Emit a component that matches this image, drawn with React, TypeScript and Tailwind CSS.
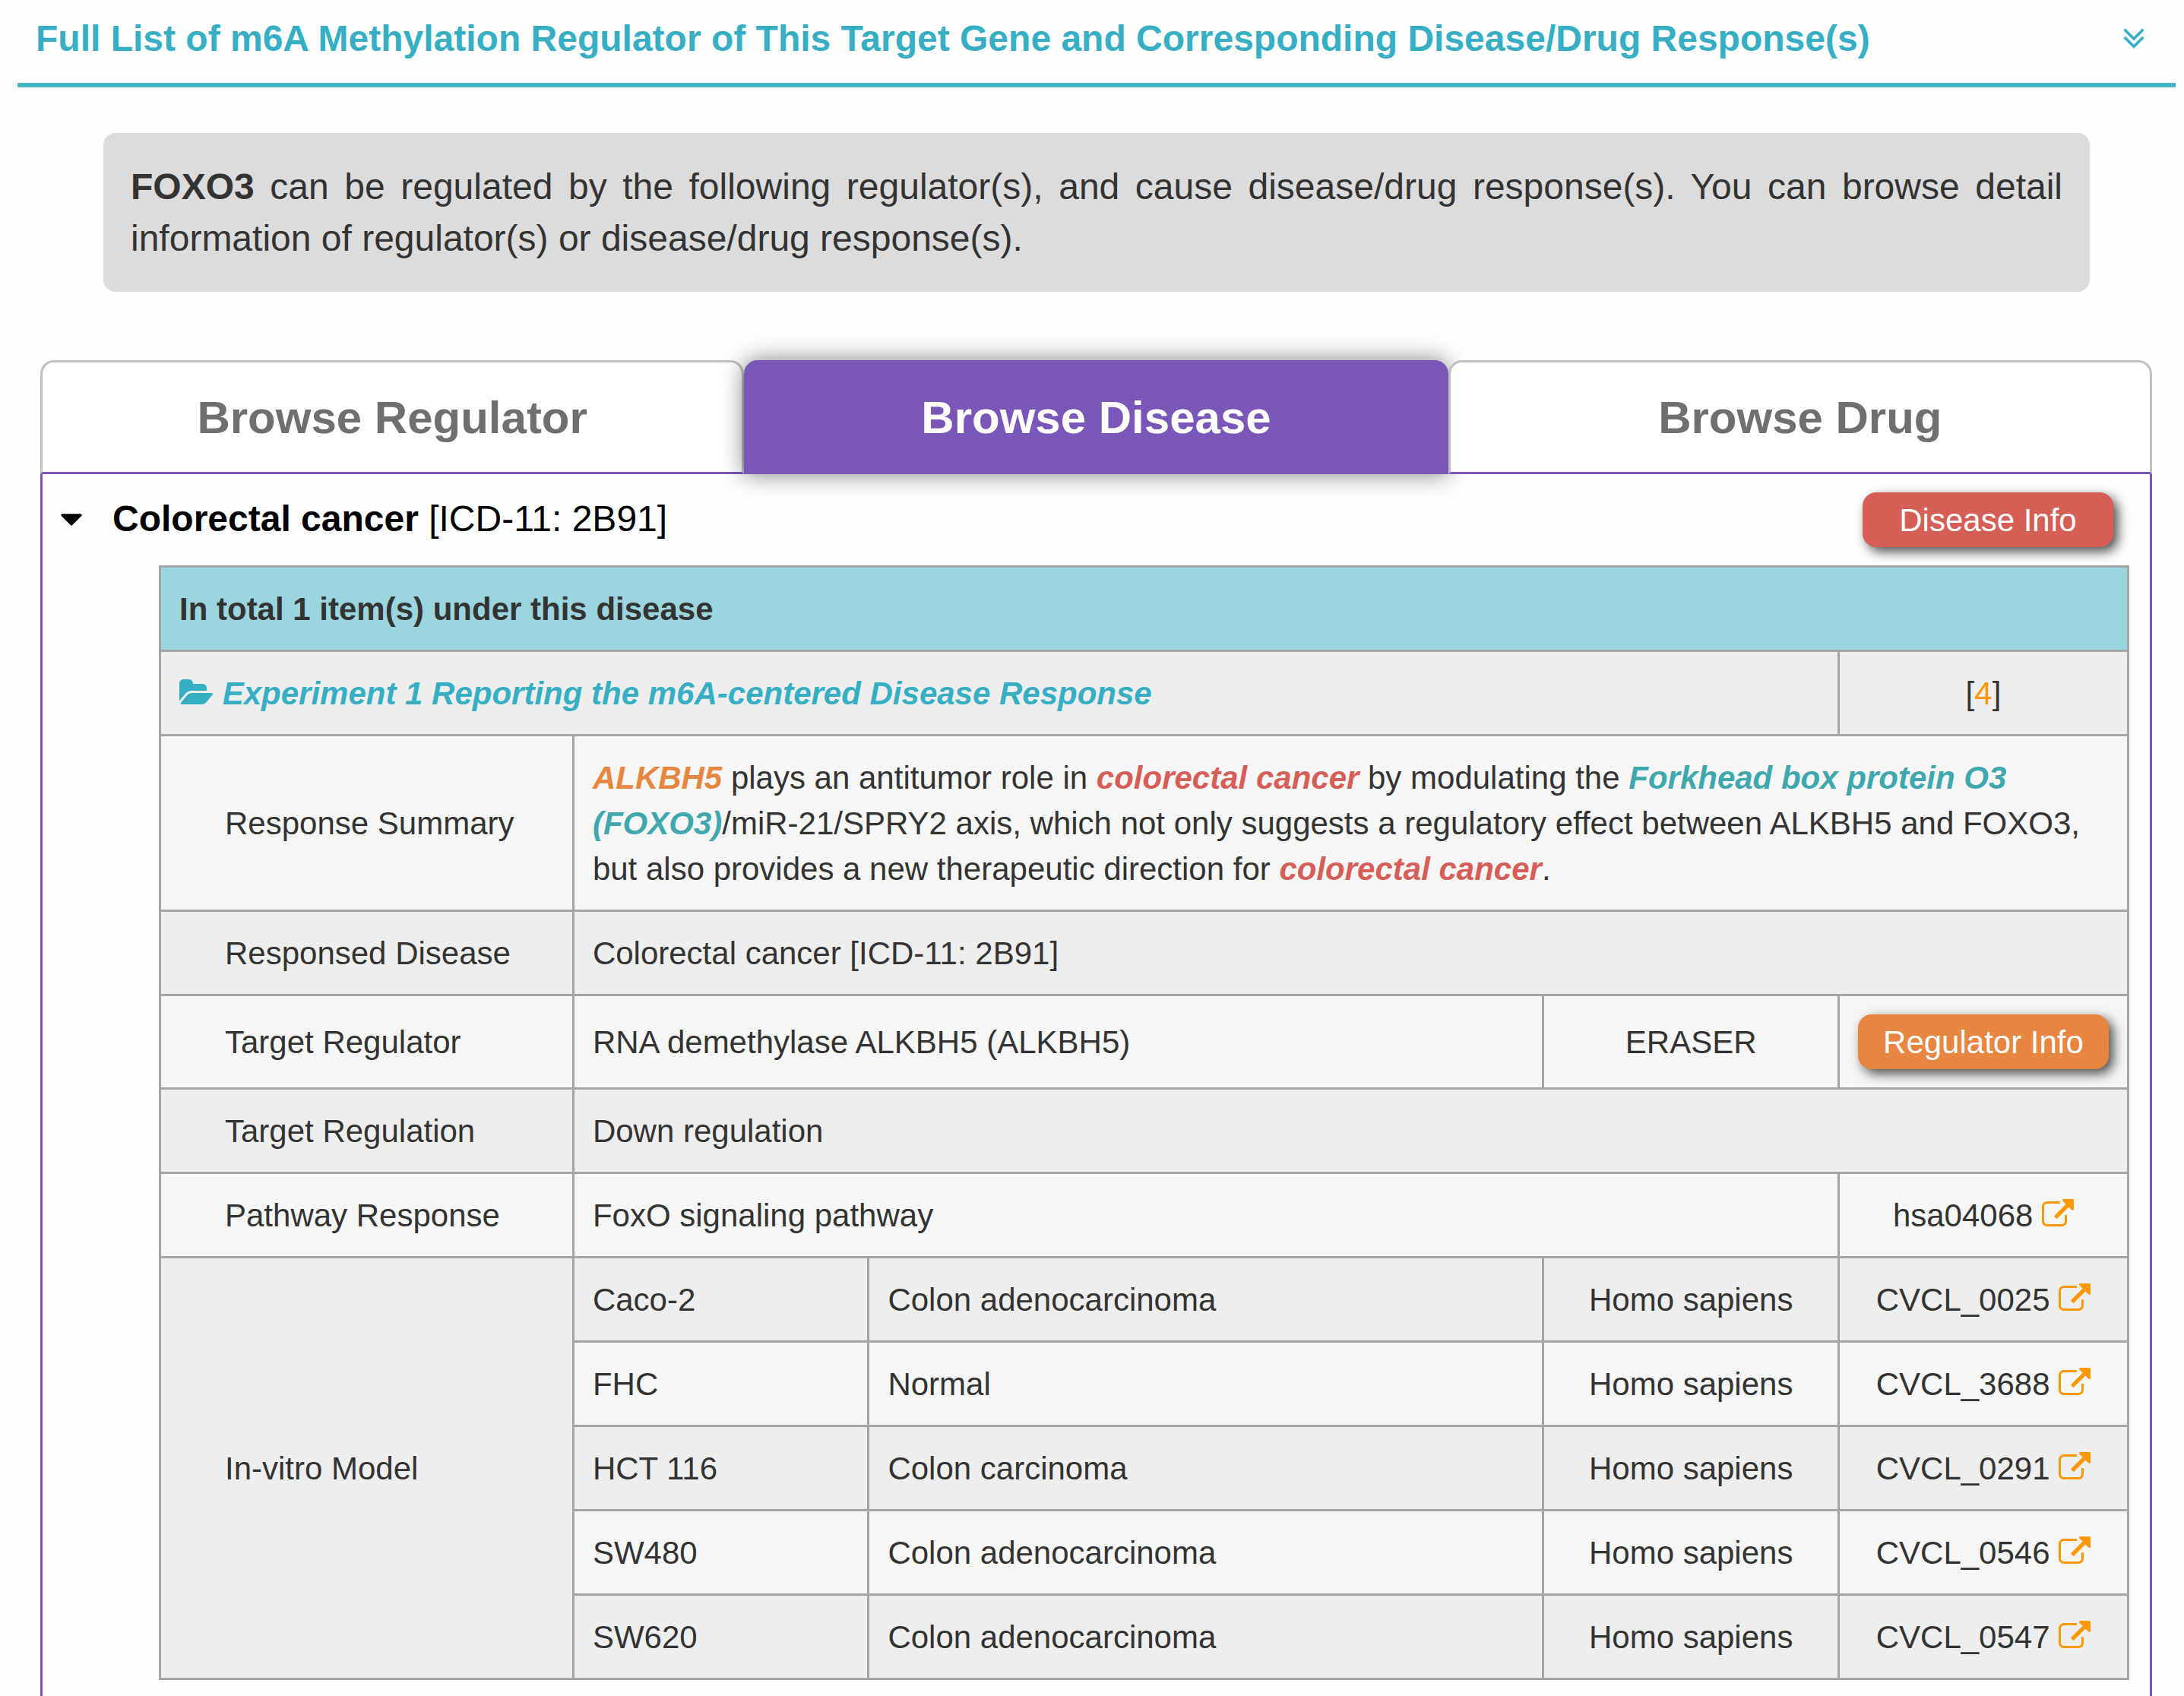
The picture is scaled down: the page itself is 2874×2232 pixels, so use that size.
import { useState } from "react";
import type { ReactNode } from "react";

const TABS = ["Browse Regulator", "Browse Disease", "Browse Drug"];

const MODELS = [
  { cell: "Caco-2", disease: "Colon adenocarcinoma", species: "Homo sapiens", id: "CVCL_0025" },
  { cell: "FHC", disease: "Normal", species: "Homo sapiens", id: "CVCL_3688" },
  { cell: "HCT 116", disease: "Colon carcinoma", species: "Homo sapiens", id: "CVCL_0291" },
  { cell: "SW480", disease: "Colon adenocarcinoma", species: "Homo sapiens", id: "CVCL_0546" },
  { cell: "SW620", disease: "Colon adenocarcinoma", species: "Homo sapiens", id: "CVCL_0547" },
];

function AngleDoubleDown() {
  return (
    <svg viewBox="0 0 1792 1792" className="size-12 block" fill="currentColor" aria-hidden="true">
      <path d="M1395 864q0 13-10 23l-466 466q-10 10-23 10t-23-10l-466-466q-10-10-10-23t10-23l50-50q10-10 23-10t23 10l393 393 393-393q10-10 23-10t23 10l50 50q10 10 10 23zm0-384q0 13-10 23l-466 466q-10 10-23 10t-23-10l-466-466q-10-10-10-23t10-23l50-50q10-10 23-10t23 10l393 393 393-393q10-10 23-10t23 10l50 50q10 10 10 23z" />
    </svg>
  );
}

function CaretDown() {
  return (
    <svg viewBox="0 0 1792 1792" className="size-12 block shrink-0" fill="currentColor" aria-hidden="true">
      <path d="M1408 704q0 26-19 45l-448 448q-19 19-45 19t-45-19l-448-448q-19-19-19-45t19-45 45-19h896q26 0 45 19t19 45z" />
    </svg>
  );
}

function FolderOpen() {
  return (
    <svg viewBox="0 0 1920 1792" className="h-[42px] w-[45px] inline-block align-[-6px]" fill="currentColor" aria-hidden="true">
      <path d="M1879 952q0 31-31 66l-336 396q-43 51-120.5 86.5t-143.5 35.5h-1088q-34 0-60.5-13t-26.5-43q0-31 31-66l336-396q43-51 120.5-86.5t143.5-35.5h1088q34 0 60.5 13t26.5 43zm-343-344v160h-832q-94 0-197 47.5t-164 119.5l-337 396-5 6q0-4-.5-12.5t-.5-12.5v-960q0-92 66-158t158-66h320q92 0 158 66t66 158v32h544q92 0 158 66t66 158z" />
    </svg>
  );
}

function ExternalLink() {
  return (
    <svg viewBox="0 0 1792 1792" className="size-[42px] inline-block align-[-6px]" fill="currentColor" aria-hidden="true">
      <path d="M1408 928v320q0 119-84.5 203.5t-203.5 84.5h-832q-119 0-203.5-84.5t-84.5-203.5v-832q0-119 84.5-203.5t203.5-84.5h704q14 0 23 9t9 23v64q0 14-9 23t-23 9h-704q-66 0-113 47t-47 113v832q0 66 47 113t113 47h832q66 0 113-47t47-113v-320q0-14 9-23t23-9h64q14 0 23 9t9 23zm384-864v512q0 26-19 45t-45 19-45-19l-176-176-652 652q-10 10-23 10t-23-10l-114-114q-10-10-10-23t10-23l652-652-176-176q-19-19-19-45t19-45 45-19h512q26 0 45 19t19 45z" />
    </svg>
  );
}

function Cell({ children, className = "pt-[25px] pb-[23px]", colSpan }: { children: ReactNode; className?: string; colSpan?: number }) {
  return (
    <td colSpan={colSpan} className={`border-3 border-[#a5a5a5] px-6 ${className}`}>
      {children}
    </td>
  );
}

function Label({ children, rowSpan }: { children: ReactNode; rowSpan?: number }) {
  return (
    <th scope="row" rowSpan={rowSpan} className="border-3 border-[#a5a5a5] pt-[25px] pr-6 pb-[23px] pl-[84px] text-left font-normal">
      {children}
    </th>
  );
}

function IdLink({ id }: { id: string }) {
  return (
    <>
      {id}{" "}
      <a href={`#${id}`} aria-label={`Open ${id}`} className="text-[#ff9800]">
        <ExternalLink />
      </a>
    </>
  );
}

function DiseaseTable() {
  return (
    <table className="w-full table-fixed border-collapse text-[42px] leading-[60px] text-[#333333]">
      <colgroup>
        <col className="w-[21%]" />
        <col className="w-[15%]" />
        <col />
        <col className="w-[15%]" />
        <col className="w-[381px]" />
      </colgroup>
      <thead>
        <tr className="bg-[#9bd5df]">
          <th colSpan={5} className="border-3 border-[#a5a5a5] px-6 pt-[25px] pb-[23px] text-left font-bold">
            In total 1 item(s) under this disease
          </th>
        </tr>
      </thead>
      <tbody>
        <tr className="bg-[#eeeeee]">
          <Cell colSpan={4} className="pt-[25px] pb-[23px] font-bold italic text-[#36aec3]">
            <FolderOpen /> Experiment 1 Reporting the m6A-centered Disease Response
          </Cell>
          <Cell className="pt-[25px] pb-[23px] text-center">
            [<a href="#ref4" className="text-[#ff9800]">4</a>]
          </Cell>
        </tr>
        <tr className="bg-[#f6f6f6]">
          <Label>Response Summary</Label>
          <Cell colSpan={4}>
            <b className="italic text-[#e78640]">ALKBH5</b> plays an antitumor role in{" "}
            <b className="italic text-[#d55f57]">colorectal cancer</b> by modulating the{" "}
            <b className="italic text-[#3fa7ae]">Forkhead box protein O3 (FOXO3)</b>
            /miR-21/SPRY2 axis, which not only suggests a regulatory effect between ALKBH5 and FOXO3, but also provides a
            new therapeutic direction for <b className="italic text-[#d55f57]">colorectal cancer</b>.
          </Cell>
        </tr>
        <tr className="bg-[#eeeeee]">
          <Label>Responsed Disease</Label>
          <Cell colSpan={4}>Colorectal cancer [ICD-11: 2B91]</Cell>
        </tr>
        <tr className="bg-[#f6f6f6]">
          <Label>Target Regulator</Label>
          <Cell colSpan={2}>RNA demethylase ALKBH5 (ALKBH5)</Cell>
          <Cell className="pt-[25px] pb-[23px] text-center">ERASER</Cell>
          <Cell className="py-6">
            <button
              type="button"
              className="mx-auto block h-[72px] w-[330px] rounded-[18px] bg-[#e78640] pt-0.5 text-white shadow-[6px_6px_15px_rgba(0,0,0,0.7)]"
            >
              Regulator Info
            </button>
          </Cell>
        </tr>
        <tr className="bg-[#eeeeee]">
          <Label>Target Regulation</Label>
          <Cell colSpan={4}>Down regulation</Cell>
        </tr>
        <tr className="bg-[#f6f6f6]">
          <Label>Pathway Response</Label>
          <Cell colSpan={3}>FoxO signaling pathway</Cell>
          <Cell className="pt-[25px] pb-[23px] text-center">
            <IdLink id="hsa04068" />
          </Cell>
        </tr>
        {MODELS.map((model, i) => (
          <tr key={model.id} className={i % 2 === 0 ? "bg-[#eeeeee]" : "bg-[#f6f6f6]"}>
            {i === 0 && <Label rowSpan={MODELS.length}>In-vitro Model</Label>}
            <Cell>{model.cell}</Cell>
            <Cell>{model.disease}</Cell>
            <Cell className="pt-[25px] pb-[23px] text-center">{model.species}</Cell>
            <Cell className="pt-[25px] pb-[23px] text-center">
              <IdLink id={model.id} />
            </Cell>
          </tr>
        ))}
      </tbody>
    </table>
  );
}

export default function App() {
  const [tab, setTab] = useState("Browse Disease");
  const [open, setOpen] = useState(true);

  return (
    <main className="flex min-h-screen flex-col bg-[#fdfefe] font-['Liberation_Sans',Arial,sans-serif]">
      <header className="mr-[11px] ml-[23px] flex items-center justify-between border-b-6 border-[#46b3c7] pt-[17px] pr-[31px] pb-6 pl-6 text-[#36aec3]">
        <h2 className="text-5xl leading-[68px] font-bold">
          Full List of m6A Methylation Regulator of This Target Gene and Corresponding Disease/Drug Response(s)
        </h2>
        <button type="button" aria-label="Toggle section">
          <AngleDoubleDown />
        </button>
      </header>

      <p className="mt-[60px] mr-[124px] ml-[136px] rounded-2xl bg-[#dcdcdc] px-9 pt-[37px] pb-9 text-justify text-5xl leading-[68px] text-[#333333]">
        <b>FOXO3</b> can be regulated by the following regulator(s), and cause disease/drug response(s). You can browse
        detail information of regulator(s) or disease/drug response(s).
      </p>

      <div className="mt-[90px] mr-[42px] ml-[53px] flex flex-1 flex-col">
        <div role="tablist" className="grid grid-cols-3">
          {TABS.map((name) => (
            <button
              key={name}
              type="button"
              role="tab"
              aria-selected={tab === name}
              onClick={() => setTab(name)}
              className={`rounded-t-[18px] border-3 pt-0.5 text-6xl leading-[142px] font-bold ${
                tab === name
                  ? "border-[#7b56b9] bg-[#7b56b9] text-white shadow-[0_0_30px_rgba(0,0,0,0.5)]"
                  : "border-[#c0c0c0] border-b-[#7b56b9] bg-white text-[#706e6f]"
              }`}
            >
              {name}
            </button>
          ))}
        </div>

        <div role="tabpanel" className="flex-1 border-x-3 border-[#7b56b9]">
          <div className="flex items-center justify-between py-6 pr-12 pl-3.5">
            <button
              type="button"
              aria-expanded={open}
              onClick={() => setOpen(!open)}
              className="flex items-center gap-[30px] pb-0.5 text-left text-5xl leading-[68px] text-black"
            >
              <CaretDown />
              <span>
                <b>Colorectal cancer</b> [ICD-11: 2B91]
              </span>
            </button>
            <button
              type="button"
              className="h-[72px] w-[330px] rounded-[18px] bg-[#d55f57] pt-0.5 text-[42px] leading-[60px] text-white shadow-[6px_6px_15px_rgba(0,0,0,0.7)]"
            >
              Disease Info
            </button>
          </div>
          <div className="mr-[27px] ml-[153px]">{open && <DiseaseTable />}</div>
        </div>
      </div>
    </main>
  );
}
